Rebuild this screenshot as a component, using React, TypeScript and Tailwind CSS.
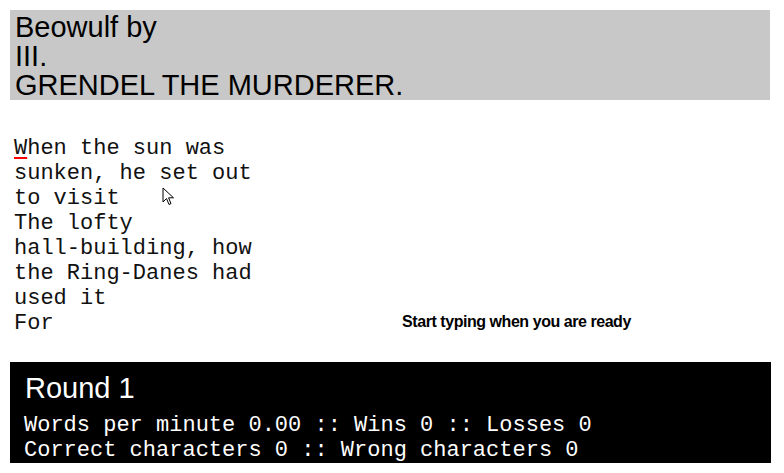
import React from "react"

const passage = [
  "hen the sun was",
  "sunken, he set out",
  "to visit",
  "The lofty",
  "hall-building, how",
  "the Ring-Danes had",
  "used it",
  "For",
]

const mono = { fontFamily: '"Courier New", "Liberation Mono", monospace' }

function Cursor() {
  return (
    <svg
      className="absolute left-[162px] top-[187px]"
      width="14"
      height="20"
      viewBox="0 0 14 20"
    >
      <path
        d="M1 1 L1 15 L4.5 11.5 L7 17.5 L9 16.6 L6.6 10.8 L11.5 10.8 Z"
        fill="#fff"
        stroke="#000"
        strokeWidth="1"
        strokeLinejoin="round"
      />
    </svg>
  )
}

export default function App() {
  return (
    <div className="relative w-[780px] p-[10px] text-black font-['Liberation_Sans',Arial,sans-serif]">
      {/* Title bar */}
      <header className="h-[90px] w-[760px] bg-[#c8c8c8] px-[5px] pt-[3px] text-[29px] leading-[29px]">
        <div>Beowulf by</div>
        <div>III.</div>
        <div>GRENDEL THE MURDERER.</div>
      </header>

      {/* Passage + prompt */}
      <main className="mt-[36px] flex w-[760px]">
        <div
          className="w-[250px] pl-[4px] text-[22px] leading-[25px] text-[#111]"
          style={mono}
        >
          {passage.map((line, i) => (
            <div key={i} className="whitespace-pre">
              {i === 0 && (
                <span className="underline decoration-[#ff0000] decoration-2 underline-offset-[3px]">
                  W
                </span>
              )}
              {line}
            </div>
          ))}
        </div>
        <div className="flex flex-1 items-end justify-center pb-[5px] pl-[3px]">
          <span className="text-[16px] font-bold tracking-[-0.45px] leading-[18px]">
            Start typing when you are ready
          </span>
        </div>
      </main>

      {/* Stats */}
      <section className="mt-[26px] h-[101px] w-[761px] bg-black pl-[14px] pt-[11px] text-white">
        <div className="pl-[1px] text-[29px] leading-[30px]">Round 1</div>
        <div className="mt-[10px] text-[22px] leading-[25px]" style={mono}>
          <div className="whitespace-pre">Words per minute 0.00 :: Wins 0 :: Losses 0</div>
          <div className="whitespace-pre">Correct characters 0 :: Wrong characters 0</div>
        </div>
      </section>

      <Cursor />
    </div>
  )
}
